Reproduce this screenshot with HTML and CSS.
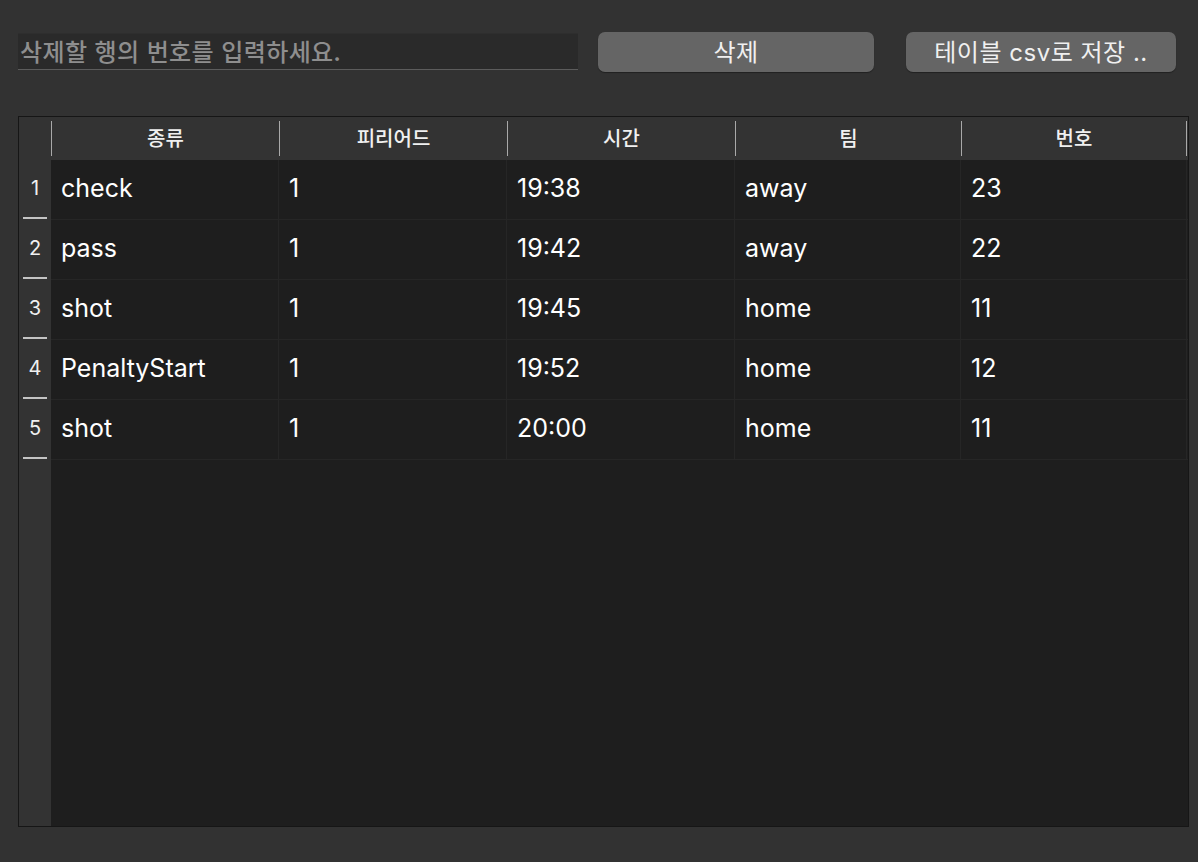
FILE: index.html
```html
<!DOCTYPE html>
<html lang="ko">
<head>
<meta charset="utf-8">
<title>Table</title>
<link rel="stylesheet" href="styles.css">
</head>
<body>
<div class="toolbar">
  <input class="rowinput" type="text" placeholder="삭제할 행의 번호를 입력하세요.">
  <button class="btn btn-delete">삭제</button>
  <button class="btn btn-save">테이블 csv로 저장 ..</button>
</div>
<div class="table">
  <div class="thead">
    <div class="corner"></div>
    <div class="th">종류</div>
    <div class="th">피리어드</div>
    <div class="th">시간</div>
    <div class="th">팀</div>
    <div class="th th-last">번호</div>
  </div>
  <div class="tbody">
    <div class="gutter">
      <div class="rn">1</div>
      <div class="rn">2</div>
      <div class="rn">3</div>
      <div class="rn">4</div>
      <div class="rn">5</div>
    </div>
    <div class="rows">
      <div class="tr"><div class="td">check</div><div class="td">1</div><div class="td">19:38</div><div class="td">away</div><div class="td">23</div></div>
      <div class="tr"><div class="td">pass</div><div class="td">1</div><div class="td">19:42</div><div class="td">away</div><div class="td">22</div></div>
      <div class="tr"><div class="td">shot</div><div class="td">1</div><div class="td">19:45</div><div class="td">home</div><div class="td">11</div></div>
      <div class="tr"><div class="td">PenaltyStart</div><div class="td">1</div><div class="td">19:52</div><div class="td">home</div><div class="td">12</div></div>
      <div class="tr"><div class="td">shot</div><div class="td">1</div><div class="td">20:00</div><div class="td">home</div><div class="td">11</div></div>
    </div>
  </div>
</div>
</body>
</html>
```

FILE: styles.css
```css
html, body {
  margin: 0;
  padding: 0;
  background: #323232;
  width: 1198px;
  height: 862px;
  overflow: hidden;
  font-family: "Inter", "Noto Sans CJK KR", sans-serif;
  color: #f2f2f2;
}

.toolbar {
  display: flex;
  align-items: flex-start;
  padding: 32px 0 0 18px;
  height: 84px;
  box-sizing: border-box;
}

.rowinput {
  width: 560px;
  height: 37px;
  margin-top: 1px;
  box-sizing: border-box;
  background: #2a2a2a;
  border: none;
  border-top: 1px solid #2e2e2e;
  border-bottom: 1px solid #5c5c5c;
  padding: 0 0 2px 2px;
  font-family: "Noto Sans CJK KR", "Inter", sans-serif;
  font-size: 24px;
  font-weight: 500;
  letter-spacing: 0.4px;
  color: #e0e0e0;
  outline: none;
}
.rowinput::placeholder {
  color: #8e8e8e;
}

.btn {
  height: 40px;
  box-sizing: border-box;
  background: #656565;
  border: none;
  border-radius: 7px;
  color: #f0f0f0;
  font-family: "Inter", "Noto Sans CJK KR", sans-serif;
  font-size: 24px;
  font-weight: 400;
  letter-spacing: 0.5px;
  padding: 0 0 4px 0;
  box-shadow: 0 1px 1px rgba(0,0,0,0.35);
}
.btn-delete {
  width: 276px;
  margin-left: 20px;
}
.btn-save {
  width: 270px;
  margin-left: 32px;
}

.table {
  margin-left: 18px;
  margin-top: 32px;
  width: 1171px;
  height: 711px;
  box-sizing: border-box;
  border: 1px solid #161616;
  background: #1e1e1e;
  display: flex;
  flex-direction: column;
}

.thead {
  display: grid;
  grid-template-columns: 32px 228px 228px 228px 226px 226px;
  height: 43px;
  background: #333333;
  flex: none;
}
.corner {
  height: 100%;
}
.th {
  margin: 4px 0;
  border-left: 1px solid #a9a9a9;
  display: flex;
  align-items: center;
  justify-content: center;
  font-family: "Noto Sans CJK KR", "Inter", sans-serif;
  font-size: 20px;
  font-weight: 500;
  color: #f0f0f0;
  padding-bottom: 3px;
}
.th-last {
  border-right: 1px solid #a9a9a9;
}

.tbody {
  flex: 1;
  display: flex;
  min-height: 0;
}
.gutter {
  width: 32px;
  background: #333333;
  display: flex;
  flex-direction: column;
  flex: none;
}
.rn {
  height: 60px;
  position: relative;
  display: flex;
  align-items: center;
  justify-content: center;
  font-size: 20px;
  color: #f0f0f0;
  padding-bottom: 4px;
  box-sizing: border-box;
}
.rn::after {
  content: "";
  position: absolute;
  left: 4px;
  right: 4px;
  bottom: 1px;
  height: 2px;
  background: #c4c4c4;
}

.rows {
  flex: 1;
}
.tr {
  display: grid;
  grid-template-columns: 228px 228px 228px 226px 226px;
  height: 60px;
  box-sizing: border-box;
  border-bottom: 1px solid #262626;
}
.td {
  display: flex;
  align-items: center;
  padding: 0 0 4px 10px;
  border-right: 1px solid #262626;
  font-size: 25px;
  color: #ffffff;
}
```
